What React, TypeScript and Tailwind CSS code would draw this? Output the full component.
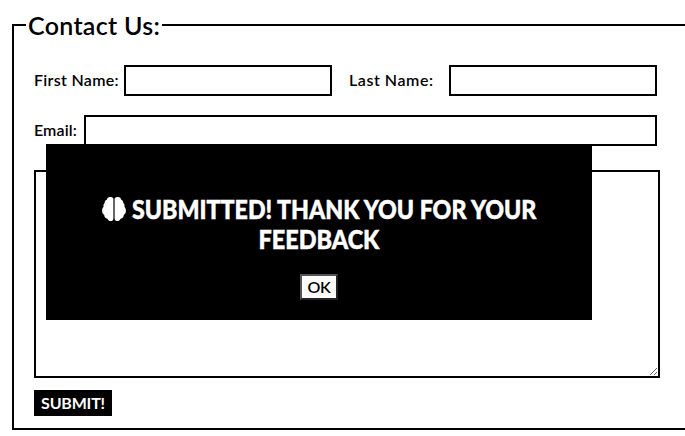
function Brain() {
  return (
    <svg viewBox="0 0 24 24" className="size-6 shrink-0" fill="currentColor" aria-hidden="true">
      <path d="M11.4 1.5C10.700.2 9.200 0 8 0 6.200 0 5 1.200 4.800 2.800 3.300 3.300 2.600 4.500 2.700 6 1.500 7 1.200 8.500 1.600 9.800.4 11 0 12.600.1 14.200c.1 1.700.9 2.900 2.100 3.600 0 2.300 1.300 3.700 3.200 3.900C6.100 23.200 7.200 24 8.600 24c1.600 0 2.800-1 2.800-2.600z" />
      <path d="M12.600 1.500C13.300.2 14.800 0 16 0c1.800 0 3 1.200 3.200 2.800 1.500.5 2.200 1.700 2.100 3.200 1.200 1 1.500 2.500 1.100 3.800 1.200 1.200 1.600 2.800 1.500 4.400-.1 1.700-.9 2.900-2.100 3.600 0 2.300-1.300 3.700-3.200 3.900C17.900 23.200 16.800 24 15.400 24c-1.600 0-2.800-1-2.800-2.600z" />
    </svg>
  );
}

export default function App() {
  return (
    <main className="h-[436px] w-[685px] overflow-hidden bg-white pt-[10px] pl-3 font-['Lato',sans-serif] font-semibold text-black">
      <fieldset className="h-[420px] w-[690px] border-2 border-black px-3">
        <legend className="h-[30px] w-[136px] px-0.5 text-[25px] leading-[30px] whitespace-nowrap">
          <span className="tracking-[0.3px]">Contact Us:</span>
        </legend>
        <div className="pt-[25px] pl-2 text-base">
          <div className="flex h-[31px] items-center">
            <label htmlFor="first" className="w-[90px] pb-0.5 tracking-[0.3px] whitespace-nowrap">First Name:</label>
            <input id="first" className="h-[31px] w-[208px] border-2 border-black px-1 outline-none" />
            <label htmlFor="last" className="ml-[17px] w-[100px] pb-0.5 tracking-[0.55px] whitespace-nowrap">Last Name:</label>
            <input id="last" className="h-[31px] w-[208px] border-2 border-black px-1 outline-none" />
          </div>
          <div className="mt-[19px] flex h-[31px] items-center">
            <label htmlFor="email" className="w-[50px] pb-0.5 tracking-[0.1px] whitespace-nowrap">Email:</label>
            <input id="email" className="h-[31px] w-[573px] border-2 border-black px-1 outline-none" />
          </div>
          <textarea className="mt-6 block h-[208px] w-[626px] resize border-2 border-black outline-none" />
          <button className="mt-3 block h-[26px] w-[78px] bg-black text-base leading-[26px] font-bold tracking-[-0.2px] whitespace-nowrap text-white">SUBMIT!</button>
        </div>
      </fieldset>
      <div role="dialog" className="absolute top-[144px] left-[46px] flex h-[176px] w-[546px] flex-col items-center bg-black pt-[50px] text-white">
        <h2 className="w-[434px] text-[26px] leading-[30px] font-black whitespace-nowrap [-webkit-text-stroke:0.5px_white]">
          <span className="flex items-center gap-1.5">
            <Brain />
            <span className="w-[405px] origin-left scale-x-[0.892]">SUBMITTED! THANK YOU FOR YOUR</span>
          </span>
          <span className="block scale-x-90 text-center">FEEDBACK</span>
        </h2>
        <button className="mt-5 h-[26px] w-[38px] border-2 border-t-[#555] border-r-[#222] border-b-[#222] border-l-[#555] bg-white text-base leading-[22px] tracking-[-0.4px] text-black">OK</button>
      </div>
    </main>
  );
}
